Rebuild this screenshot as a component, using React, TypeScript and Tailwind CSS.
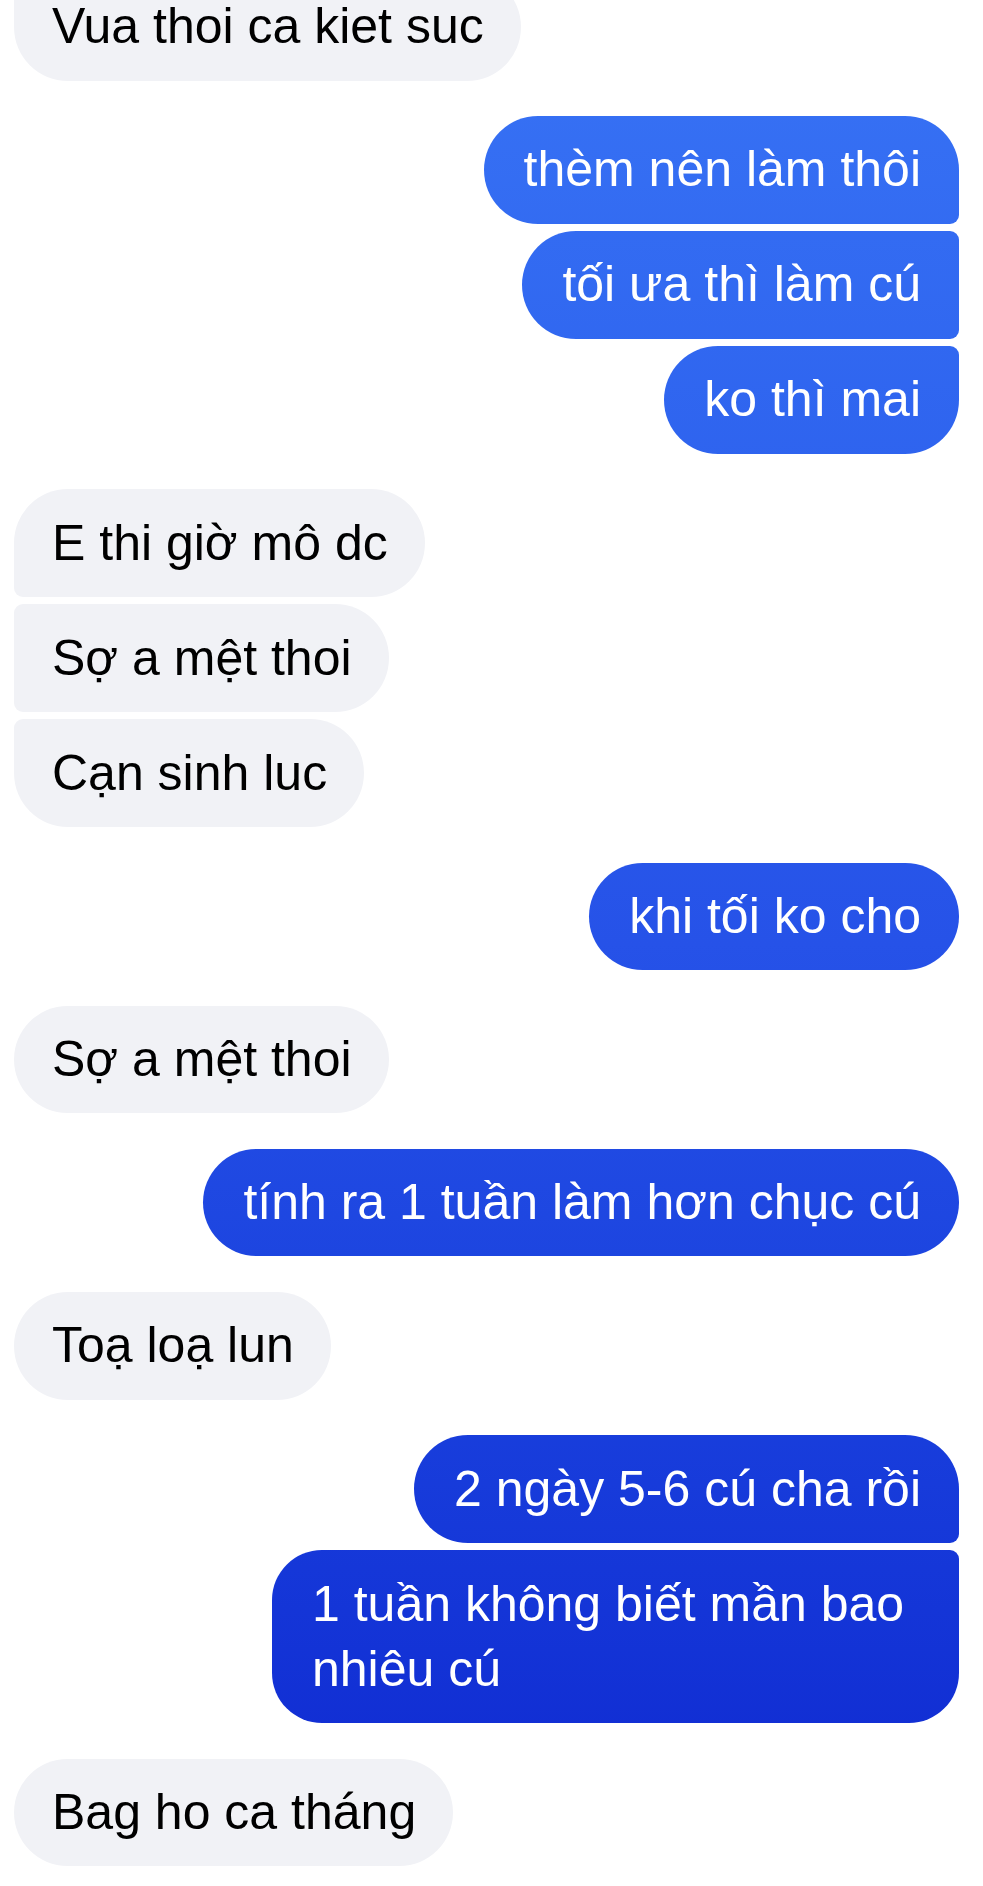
import React from "react";

type Msg = { from: "me" | "them"; text: string; width?: string };

const messages: Msg[] = [
  { from: "them", text: "Vua thoi ca kiet suc" },
  { from: "me", text: "thèm nên làm thôi" },
  { from: "me", text: "tối ưa thì làm cú" },
  { from: "me", text: "ko thì mai" },
  { from: "them", text: "E thi giờ mô dc" },
  { from: "them", text: "Sợ a mệt thoi" },
  { from: "them", text: "Cạn sinh luc" },
  { from: "me", text: "khi tối ko cho" },
  { from: "them", text: "Sợ a mệt thoi" },
  { from: "me", text: "tính ra 1 tuần làm hơn chục cú" },
  { from: "them", text: "Toạ loạ lun" },
  { from: "me", text: "2 ngày 5-6 cú cha rồi" },
  { from: "me", text: "1 tuần không biết mần bao\nnhiêu cú", width: "w-[687px]" },
  { from: "them", text: "Bag ho ca tháng" },
];

function Bubble({ msg, prevSame, nextSame }: { msg: Msg; prevSame: boolean; nextSame: boolean }) {
  const mine = msg.from === "me";

  // corners next to a neighbour from the same sender get tucked in
  let corners = "";
  if (mine) {
    corners = `${prevSame ? "rounded-tr-[9px]" : ""} ${nextSame ? "rounded-br-[9px]" : ""}`;
  } else {
    corners = `${prevSame ? "rounded-tl-[9px]" : ""} ${nextSame ? "rounded-bl-[9px]" : ""}`;
  }

  const multi = msg.text.includes("\n");

  return (
    <div
      className={`${multi ? "rounded-[50px] whitespace-pre-line" : "rounded-[54px] whitespace-nowrap"} ${corners} ${
        msg.width ?? ""
      } py-[21.25px] ${mine ? "pl-[40px] pr-[38px]" : "pl-[38px] pr-[37px]"} ${
        mine
          ? "bg-fixed bg-linear-to-b from-[#3873f5] via-[#2652e8] to-[#0f26d0] text-white"
          : "bg-[#f1f2f6] text-black"
      }`}
    >
      {msg.text}
    </div>
  );
}

export default function App() {
  return (
    <div className="min-h-screen overflow-hidden bg-white pl-[14px] pr-[24px] font-['Liberation_Sans',Arial,sans-serif] text-[50px] leading-[65px]">
      {messages.map((msg, i) => {
        const prevSame = i === 0 || messages[i - 1].from === msg.from;
        const nextSame = i < messages.length - 1 && messages[i + 1].from === msg.from;
        const spacing = i === 0 ? "-mt-[27px]" : prevSame ? "mt-[7.5px]" : "mt-[35.7px]";
        return (
          <div key={i} className={`flex ${msg.from === "me" ? "justify-end" : "justify-start"} ${spacing}`}>
            <Bubble msg={msg} prevSame={prevSame} nextSame={nextSame} />
          </div>
        );
      })}
    </div>
  );
}
